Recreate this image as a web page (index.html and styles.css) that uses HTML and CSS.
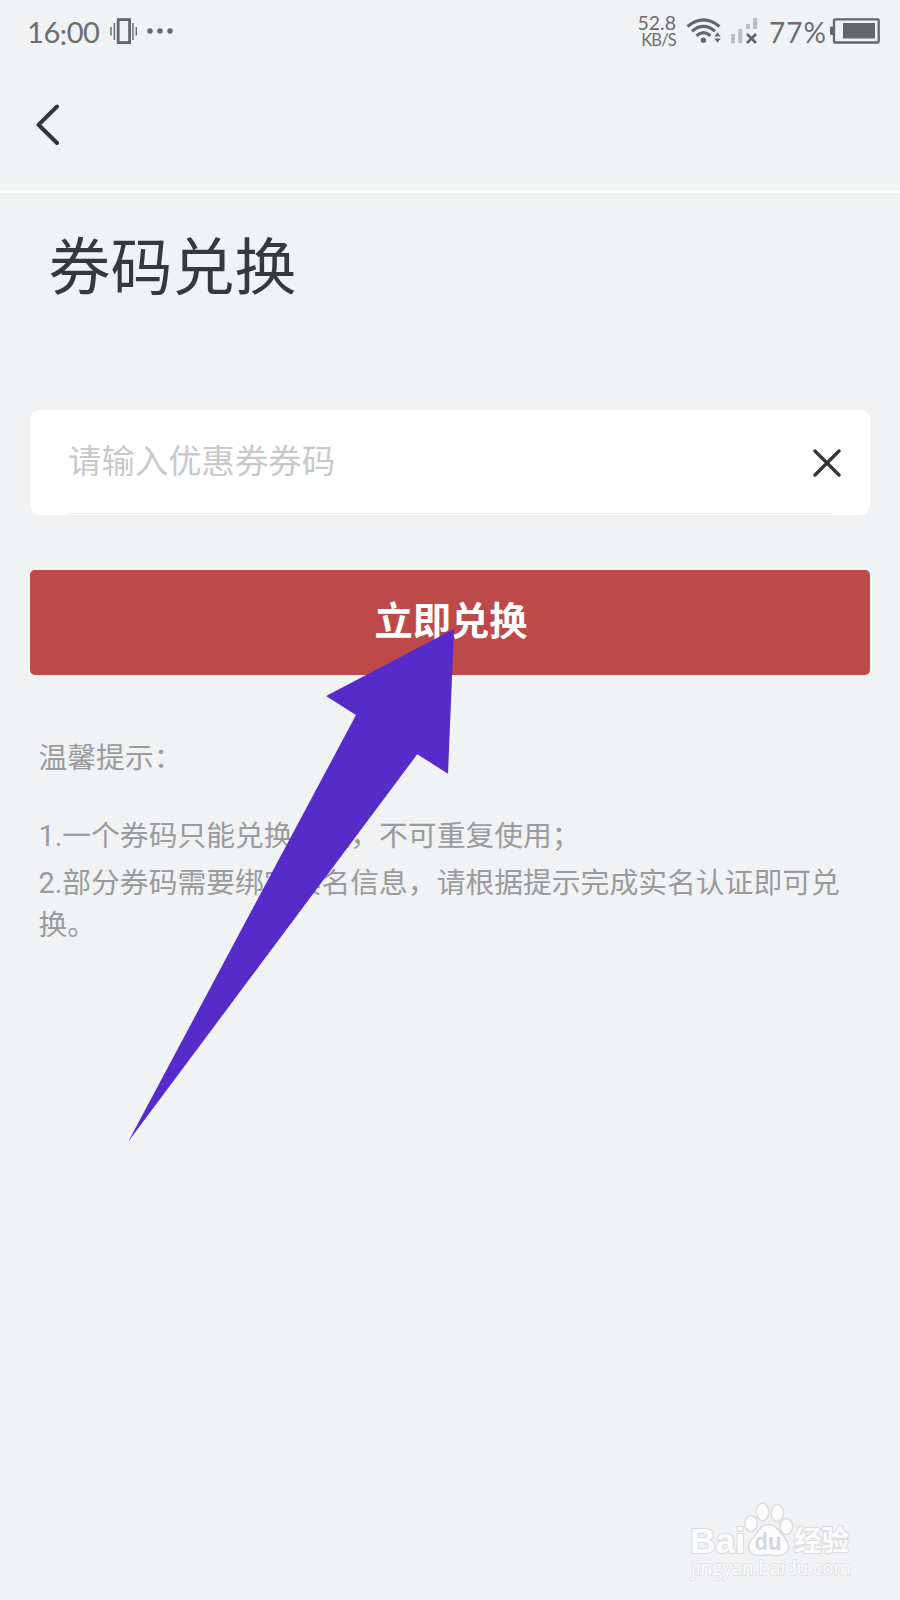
FILE: index.html
```html
<!DOCTYPE html>
<html lang="zh-CN">
<head>
<meta charset="UTF-8">
<title>券码兑换</title>
<link rel="stylesheet" href="styles.css">
</head>
<body>
<div class="screen">
  <header class="statusbar">
    <div class="status-left">
      <span class="clock">16<span class="colon">:</span>00</span>
      <svg class="vibrate" width="28" height="26" viewBox="0 0 28 26" fill="none" stroke="#646667">
        <rect x="8.2" y="1.6" width="11.4" height="23" stroke-width="2.8"/>
        <path d="M4.4 5v17M23 5v17" stroke-width="1.4"/>
        <path d="M1 9v8.500M26.300 9v8.500" stroke-width="1.400"/>
      </svg>
      <svg class="dots" width="26" height="6" viewBox="0 0 26 6" fill="#646667">
        <circle cx="3" cy="3" r="2.700"/><circle cx="13" cy="3" r="2.700"/><circle cx="23" cy="3" r="2.700"/>
      </svg>
    </div>
    <div class="status-right">
      <div class="speed"><span class="speed-value">52.8</span><span class="speed-unit">KB/S</span></div>
      <svg class="wifi" width="36" height="28" viewBox="0 0 36 28" fill="none" stroke="#646667">
        <path d="M1.500 9.500Q17.500-3.800 33.500 9.500" stroke-width="3.200"/>
        <path d="M6 14.300Q17.500 4.600 29 14.300" stroke-width="3.200"/>
        <path d="M10.500 18.700Q17.500 12.600 24.500 18.700" stroke-width="3.200"/>
        <circle cx="17.400" cy="23.300" r="2.700" fill="#646667" stroke="none"/>
        <path d="M31.500 15.200l3.200 4.300h-6.400zM31.500 25.800l3.200-4.300h-6.400z" fill="#646667" stroke="none"/>
      </svg>
      <svg class="signal" width="30" height="28" viewBox="0 0 30 28">
        <g fill="#bbbdbf"><rect x="1" y="17" width="4" height="9.300" rx="1"/><rect x="8.300" y="12" width="4" height="14.300" rx="1"/><rect x="16" y="7" width="4" height="5" rx="1"/><rect x="23" y="1" width="4.300" height="11" rx="1"/></g>
        <path d="M17 17l9 9M26 17l-9 9" stroke="#646667" stroke-width="2.700"/>
      </svg>
      <span class="percent">77%</span>
      <svg class="battery" width="50" height="26" viewBox="0 0 50 26">
        <rect x="4" y="1.300" width="44.700" height="23.200" rx="1" fill="none" stroke="#646667" stroke-width="2.300"/>
        <path d="M0 9.500q0-1 1-1h2.500v8.500H1q-1 0-1-1z" fill="#646667"/>
        <rect x="13" y="5" width="32" height="15.500" fill="#646667"/>
      </svg>
    </div>
  </header>
  <nav class="navbar">
    <svg class="back" width="24" height="42" viewBox="0 0 24 42" fill="none" stroke="#333538" stroke-width="4" stroke-linecap="round" stroke-linejoin="round"><path d="M21 2.500L2.500 20.800 21 39"/></svg>
  </nav>
  <main class="content">
    <h1 class="title">券码兑换</h1>
    <div class="field">
      <span class="placeholder">请输入优惠券券码</span>
      <svg class="clear" width="29" height="28" viewBox="0 0 29 28" stroke="#343537" stroke-width="3.300" stroke-linecap="round"><path d="M2 2l24 24M26 2L2 26"/></svg>
    </div>
    <div class="submit">立即兑换</div>
    <section class="tips">
      <p class="tips-title">温馨提示：</p>
      <p class="tip">1.一个券码只能兑换一次，不可重复使用；</p>
      <p class="tip">2.部分券码需要绑定实名信息，请根据提示完成实名认证即可兑换。</p>
    </section>
  </main>
  <svg class="pointer" width="330" height="516" viewBox="126 627 330 516"><path d="M454 629L326 696 356 715 128.300 1141.500 417.300 754.200 448 773.800z" fill="#552bc9"/></svg>
  <svg class="watermark" width="176" height="94" viewBox="682 1498 176 94">
    <g fill="#fcfcfd" stroke="#dcdde0" stroke-width="1.600">
      <g class="brand">
        <text x="690" y="1553" font-size="35" textLength="55" lengthAdjust="spacingAndGlyphs">Bai</text>
        <text class="brand-cn" x="794" y="1551" font-size="28" textLength="55" lengthAdjust="spacingAndGlyphs">经验</text>
      </g>
      <ellipse cx="751" cy="1523.500" rx="6.200" ry="8"/>
      <ellipse cx="762.500" cy="1512" rx="6.200" ry="8.800"/>
      <ellipse cx="777.300" cy="1513" rx="6.200" ry="8.500"/>
      <ellipse cx="786.300" cy="1526.500" rx="6.200" ry="8"/>
      <path d="M768.500 1524.500C760 1524.500 758 1533 753 1538C747 1543 747 1553 755 1555C760 1556 764 1554.500 769 1555C775 1556 785 1557 788 1550C791 1542 784 1538 780 1532C777 1527 774 1524.500 768.500 1524.500Z"/>
      <text class="du" x="754.500" y="1550" font-size="24" textLength="27" lengthAdjust="spacingAndGlyphs">du</text>
      <text class="url" x="691" y="1575" font-size="19.500" textLength="160" lengthAdjust="spacingAndGlyphs">jingyan.baidu.com</text>
    </g>
  </svg>
</div>
</body>
</html>
```
FILE: styles.css
```css
body {
  margin: 0;
  background: #f0f2f4;
  font-family: Roboto, "Noto Sans CJK SC", sans-serif;
}
p, h1 { margin: 0; }
svg { display: block; flex: none; }
.screen {
  position: relative;
  box-sizing: border-box;
  width: 900px;
  height: 1600px;
  overflow: hidden;
}
.statusbar {
  display: flex;
  justify-content: space-between;
  box-sizing: border-box;
  height: 64px;
  padding: 14px 20px 0 27px;
  color: #6c6d6f;
  font-family: Lato, sans-serif;
}
.status-left, .status-right {
  display: flex;
  align-items: center;
  height: 34px;
}
.clock {
  width: 73px;
  padding-top: 2px;
  font-size: 29px;
  line-height: 34px;
  letter-spacing: -0.4px;
  white-space: nowrap;
}
.colon { vertical-align: -2px; line-height: 1; }
.vibrate { margin-left: 10px; }
.dots { margin-left: 9px; }
.speed {
  display: flex;
  flex-direction: column;
  align-items: flex-end;
  margin-right: 10px;
}
.speed-value { font-size: 19.5px; line-height: 18px; }
.speed-unit { font-size: 16.5px; line-height: 17px; letter-spacing: -0.8px; }
.signal { margin-left: 8px; }
.percent {
  width: 61px;
  margin-left: 9px;
  padding-top: 2px;
  font-size: 28px;
  line-height: 34px;
  letter-spacing: 1px;
  white-space: nowrap;
}
.navbar {
  display: flex;
  align-items: center;
  box-sizing: border-box;
  height: 129px;
  padding: 0 36px 4px;
  border-bottom: 3px solid #fbfcfc;
}
.content { padding: 21px 30px 0; }
.title {
  padding-left: 18.5px;
  color: #36383d;
  font-size: 62px;
  font-weight: 400;
  line-height: 110px;
}
.field {
  display: flex;
  align-items: center;
  justify-content: space-between;
  box-sizing: border-box;
  height: 105px;
  margin-top: 86px;
  padding: 0 28px 0 38px;
  border-radius: 9px;
  background: linear-gradient(#eff0f2, #eff0f2) 38px 103px / 764px 1px no-repeat #fff;
}
.placeholder {
  padding-bottom: 2px;
  color: #c8c9ca;
  font-size: 33.4px;
  line-height: 98px;
}
.submit {
  box-sizing: border-box;
  height: 105px;
  margin-top: 55px;
  padding-left: 2px;
  border-radius: 5px;
  background: #bd4948;
  color: #fff;
  font-size: 38.3px;
  font-weight: 700;
  line-height: 103px;
  text-align: center;
}
.tips {
  padding: 62px 0 0 8.5px;
  color: #999b9c;
  font-size: 28.8px;
  line-height: 42px;
}
.tips-title { margin-bottom: 36px; }
.tip { margin-bottom: 5px; }
.pointer {
  position: absolute;
  left: 126px;
  top: 627px;
}
.watermark {
  position: absolute;
  left: 682px;
  top: 1498px;
}
.watermark text { paint-order: stroke; stroke-width: 2.2px; }
.brand { font-family: "Liberation Sans", sans-serif; font-weight: 700; }
.brand-cn { font-family: "Noto Sans CJK SC", sans-serif; }
.watermark .du { fill: #d6d7da; stroke: none; font-family: "Liberation Sans", sans-serif; font-weight: 700; }
.watermark .url { font-family: "Open Sans", sans-serif; stroke-width: 1.5px; }
```
